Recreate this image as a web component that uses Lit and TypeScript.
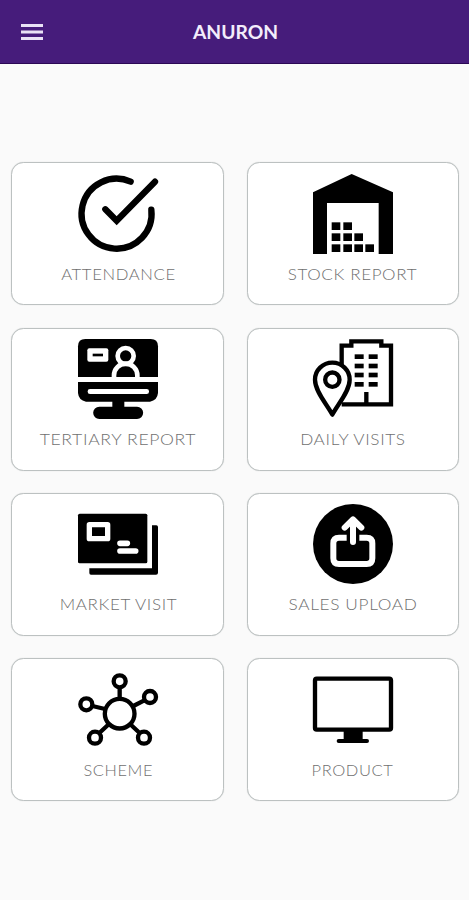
import { LitElement, html, svg, css, SVGTemplateResult } from "lit";
import { customElement } from "lit/decorators.js";

interface Tile {
  label: string;
  start: number;
  width: number;
  icon: SVGTemplateResult;
}

const block = (x: number, y: number) => svg`<rect x=${x} y=${y} width="26" height="23"/>`;
const pane = (x: number, y: number) => svg`<rect x=${x} y=${y} width="27" height="14"/>`;

// Icons share a 240-unit square; the labels are fitted to their measured widths.
const tiles: Tile[] = [
  {
    label: "ATTENDANCE", start: 48.2, width: 114.500,
    icon: svg`<g fill="none" stroke="#000" stroke-width="19" stroke-linecap="round" stroke-linejoin="round">
      <path d="M158 23A105 105 0 1 0 220 107"/>
      <path d="M82 106L116 140L231 23" stroke-linejoin="miter"/></g>`,
  },
  {
    label: "STOCK REPORT", start: 39.7, width: 129.500,
    icon: svg`<path d="M0 55L116 0L240 55V240H197V87H42V240H0Z"/>
      ${block(56, 145)}${block(91, 145)}
      ${block(56, 178)}${block(91, 178)}${block(124, 178)}
      ${block(56, 211)}${block(91, 211)}${block(124, 211)}${block(157, 211)}`,
  },
  {
    label: "TERTIARY REPORT", start: 26.7, width: 156.500,
    icon: svg`<path d="M22 0H218Q240 0 240 22V114H0V22Q0 0 22 0Z"/>
      <path d="M0 129H240V162Q238 184 216 188H139V203H177A18.500 18.500 0 0 1 177 240H64A18.500 18.500 0 0 1 64 203H103V188H24Q2 184 0 162Z"/>
      <rect x="28" y="28" width="63" height="40" rx="6" fill="#fff"/>
      <rect x="44" y="44" width="31" height="8"/>
      <rect x="29" y="150" width="184" height="15" rx="7" fill="#fff"/>
      <g fill="none" stroke="#fff" stroke-width="14"><circle cx="143" cy="51" r="24"/>
      <path d="M108 119V109A35 35 0 0 1 178 109V119"/></g>`,
  },
  {
    label: "DAILY VISITS", start: 52.2, width: 105.500,
    icon: svg`<g fill="none" stroke="#000" stroke-width="13">
      <path d="M86 78V20H115V7H205V20H234V196H86M160 196V159"/>
      <path d="M58 227C45 200 6 158 6 122A52 51 0 0 1 110 122C110 158 71 200 58 227Z" fill="#fff"  stroke-linejoin="round"/>
      <circle cx="58" cy="122" r="21.500"/></g>
      ${[46, 74, 101, 129].map((y) => svg`${pane(125, y)}${pane(167, y)}`)}`,
  },
  {
    label: "MARKET VISIT", start: 46.7, width: 117.500,
    icon: svg`<rect x="0" y="29" width="208" height="149" rx="5"/>
      <path d="M222 64H235Q240 64 240 69V206Q240 212 234 212H39Q34 212 34 207V193H222Z"/>
      <rect x="34" y="62" width="55" height="42" fill="none" stroke="#fff" stroke-width="16" stroke-linejoin="round"/>
      <path d="M126 118H148M126 141H173" stroke="#fff" stroke-width="17" stroke-linecap="round"/>`,
  },
  {
    label: "SALES UPLOAD", start: 40.5, width: 129,
    icon: svg`<circle cx="120" cy="120" r="120"/>
      <g fill="none" stroke="#fff" stroke-width="18" stroke-linecap="round" stroke-linejoin="round">
      <path d="M101 101H78Q61 101 61 118V163Q61 180 78 180H161Q178 180 178 163V118Q178 101 161 101H139" stroke-linecap="butt"/>
      <path d="M120 114V48M95 71L120 46L145 71"/></g>`,
  },
  {
    label: "SCHEME", start: 70.500, width: 69.500,
    icon: svg`<g fill="none" stroke="#000" stroke-width="13">
      <circle cx="125" cy="131" r="44.500"/>
      <circle cx="125" cy="34" r="18"/><circle cx="216" cy="81" r="18"/>
      <circle cx="25" cy="103" r="18"/><circle cx="51" cy="203" r="18"/><circle cx="198" cy="203" r="18"/>
      <path d="M125 53V86M199 91L166 108M43 108L81 117M64 189L93 162M185 189L156 162"/></g>`,
  },
  {
    label: "PRODUCT", start: 63.500, width: 82,
    icon: svg`<rect x="6" y="26" width="228" height="153" rx="5" fill="none" stroke="#000" stroke-width="13"/>
      <path d="M92 182H149V207H162A6 6 0 0 1 162 219H77A6 6 0 0 1 77 207H92Z"/>`,
  },
];

@customElement("app-root")
export class AppRoot extends LitElement {
  static styles = css`
    :host {
      display: block;
      min-height: 900px;
      background: #fafafa;
      font-family: Lato, "Liberation Sans", sans-serif;
    }
    .bar {
      box-sizing: border-box;
      height: 64px;
      display: grid;
      grid-template-columns: 65px 1fr 65px;
      align-items: center;
      background: #461c7b;
      border-bottom: 1px solid #2b0755;
    }
    .menu {
      display: block;
      width: 22px;
      height: 18px;
      margin-left: 21px;
    }
    .title {
      display: block;
      justify-self: center;
      width: 85px;
      height: 24px;
      margin-left: 2px;
      overflow: visible;
      fill: #f3edfb;
      font-size: 18px;
      font-weight: 700;
    }
    .grid {
      display: grid;
      grid-template-columns: repeat(2, minmax(0, 1fr));
      grid-auto-rows: 143px;
      gap: 22.300px 22.600px;
      padding: 98.300px 9.800px 0 11.300px;
    }
    .card {
      box-sizing: border-box;
      display: flex;
      flex-direction: column;
      align-items: center;
      padding-top: 10.500px;
      background: #fff;
      border: 1px solid #bcc1c1;
      border-radius: 12.500px;
      box-shadow: 0 0 1px #c6caca;
    }
    .icon {
      display: block;
      flex: none;
      width: 80px;
      height: 80px;
      overflow: visible;
    }
    .label {
      display: block;
      flex: none;
      width: 210px;
      height: 36px;
      overflow: visible;
      fill: #707070;
      font-size: 16px;
      font-weight: 300;
      letter-spacing: 0.600px;
    }
  `;

  render() {
    return html`
      <header class="bar">
        <svg class="menu" viewBox="0 0 22 18" aria-label="Menu">
          <path d="M0 2.500H22M0 9H22M0 15.500H22" stroke="#e9e2f6" stroke-width="3" />
        </svg>
        <svg class="title" viewBox="0 0 85 24">
          <text x="0" y="19" textLength="85" lengthAdjust="spacingAndGlyphs">ANURON</text>
        </svg>
      </header>
      <main class="grid">
        ${tiles.map(
          (t) => html`<section class="card">
            <svg class="icon" viewBox="0 0 240 240">${t.icon}</svg>
            <svg class="label" viewBox="0 0 210 36">
              <text x=${t.start} y="25.500" textLength=${t.width} lengthAdjust="spacingAndGlyphs">${t.label}</text>
            </svg>
          </section>`
        )}
      </main>
    `;
  }
}
